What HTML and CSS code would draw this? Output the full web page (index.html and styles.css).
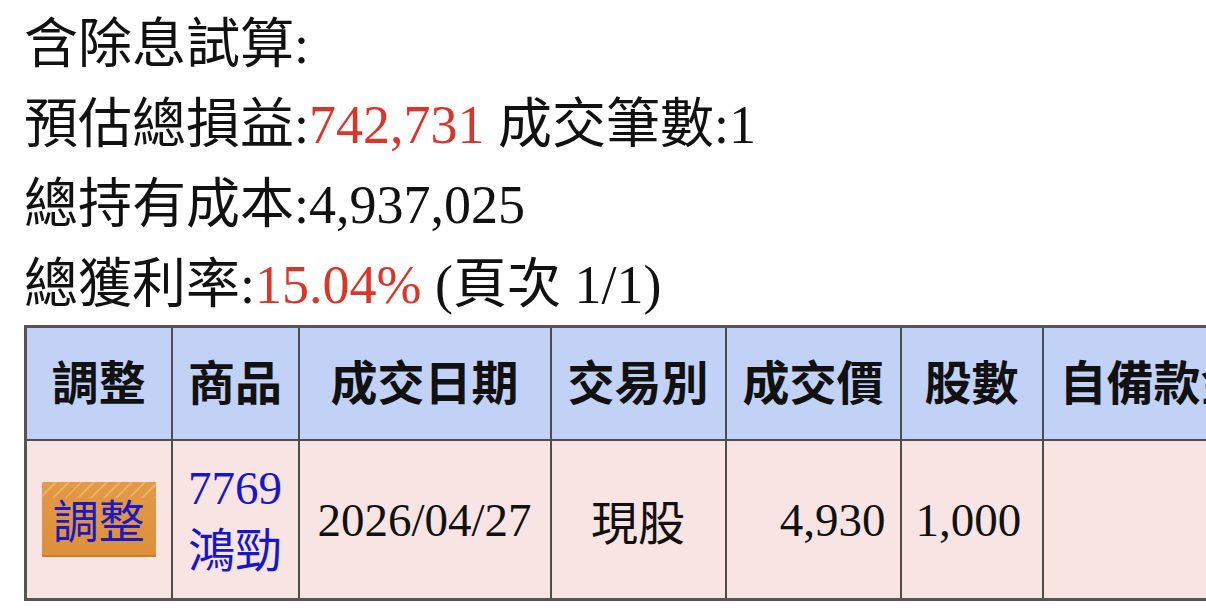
FILE: index.html
```html
<!DOCTYPE html>
<html lang="zh-Hant">
<head>
<meta charset="utf-8">
<title>含除息試算</title>
<link rel="stylesheet" href="styles.css">
</head>
<body>
<div class="page">
  <div class="summary">
    <div class="line">含除息試算:</div>
    <div class="line">預估總損益:<span class="red">742,731</span> 成交筆數:1</div>
    <div class="line">總持有成本:4,937,025</div>
    <div class="line">總獲利率:<span class="red">15.04%</span> (頁次 1/1)</div>
  </div>
  <table class="trades">
    <colgroup>
      <col class="c-adj">
      <col class="c-item">
      <col class="c-date">
      <col class="c-type">
      <col class="c-price">
      <col class="c-qty">
      <col class="c-own">
    </colgroup>
    <thead>
      <tr>
        <th>調整</th>
        <th>商品</th>
        <th>成交日期</th>
        <th>交易別</th>
        <th>成交價</th>
        <th>股數</th>
        <th class="own">自備款金額</th>
      </tr>
    </thead>
    <tbody>
      <tr>
        <td class="center"><a class="btn" href="#">調整</a></td>
        <td class="center item"><a class="link" href="#">7769<br>鴻勁</a></td>
        <td class="center">2026/04/27</td>
        <td class="center">現股</td>
        <td class="right">4,930</td>
        <td class="left">1,000</td>
        <td></td>
      </tr>
    </tbody>
  </table>
</div>
</body>
</html>
```
FILE: styles.css
```css
html {
  overflow: hidden;
  background: #ffffff;
}
body {
  margin: 0;
  font-family: "Liberation Serif", "Noto Sans CJK TC", serif;
  color: #111111;
}
.page {
  padding: 0 0 0 24px;
}
.summary {
  padding-top: 5px;
  font-size: 54px;
  line-height: 80px;
}
.line {
  white-space: nowrap;
}
.red {
  color: #d9362b;
}
.trades {
  border-collapse: collapse;
  table-layout: fixed;
  width: 1300px;
  font-size: 47px;
  border: 3px solid #555555;
}
.c-adj { width: 146px; }
.c-item { width: 127px; }
.c-date { width: 252px; }
.c-type { width: 175px; }
.c-price { width: 175px; }
.c-qty { width: 142px; }
.c-own { width: 283px; }
.trades th,
.trades td {
  border: 2px solid #4d4d4d;
  padding: 0;
  white-space: nowrap;
  overflow: hidden;
}
.trades th {
  background: #c1d2f6;
  font-family: "Noto Sans CJK TC", sans-serif;
  font-weight: 700;
  height: 103px;
  padding-bottom: 8px;
  text-align: center;
  color: #111111;
}
.trades th.own {
  text-align: left;
  padding-left: 16px;
}
.trades td {
  background: #f9e4e4;
  height: 157px;
  vertical-align: middle;
}
.center { text-align: center; }
.right { text-align: right; padding-right: 14px !important; }
.left { text-align: left; padding-left: 14px !important; }
.item { line-height: 63px; }
.link {
  color: #1717c8;
  text-decoration: none;
}
.btn {
  display: inline-block;
  width: 114px;
  height: 75px;
  line-height: 73px;
  text-align: center;
  font-family: "Noto Sans CJK TC", sans-serif;
  font-size: 46px;
  color: #1a1ac4;
  text-decoration: none;
  vertical-align: middle;
  background:
    repeating-linear-gradient(-45deg, rgba(255,255,255,0.22) 0 2px, rgba(255,255,255,0) 2px 9px) top / 100% 16px no-repeat,
    linear-gradient(#e39a45, #dd8f3a);
  box-shadow: inset 0 -2px 0 #c97d2c;
}
```
